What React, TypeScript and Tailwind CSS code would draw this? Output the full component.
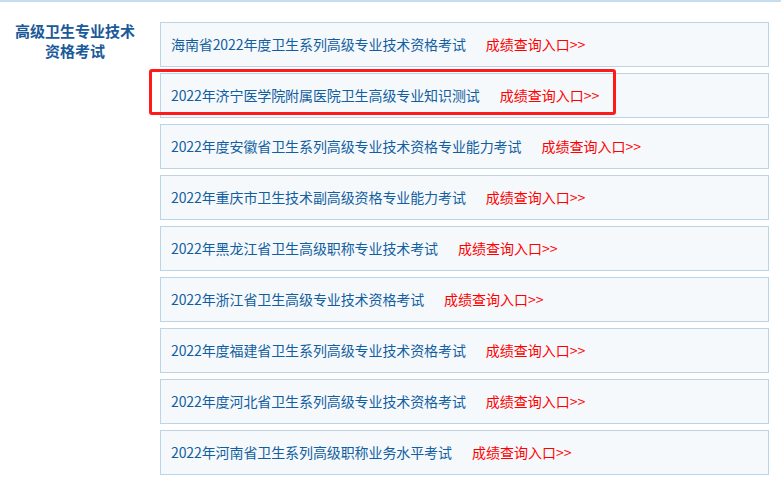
const exams = [
  '海南省2022年度卫生系列高级专业技术资格考试',
  '2022年济宁医学院附属医院卫生高级专业知识测试',
  '2022年度安徽省卫生系列高级专业技术资格专业能力考试',
  '2022年重庆市卫生技术副高级资格专业能力考试',
  '2022年黑龙江省卫生高级职称专业技术考试',
  '2022年浙江省卫生高级专业技术资格考试',
  '2022年度福建省卫生系列高级专业技术资格考试',
  '2022年度河北省卫生系列高级专业技术资格考试',
  '2022年河南省卫生系列高级职称业务水平考试',
];

export default function App() {
  return (
    <div
      className="w-[781px] h-[485px] bg-white border-t-2 border-[#c6dcef] overflow-hidden"
      style={{ fontFamily: '"Noto Sans CJK SC", "Noto Sans", sans-serif' }}
    >
      <div className="flex pt-[20px]">
        {/* category title */}
        <div className="w-[150px] shrink-0 text-center text-[15px] font-bold leading-[20px] text-[#1b5a99] -mt-[1px]">
          高级卫生专业技术
          <br />
          资格考试
        </div>

        {/* exam list */}
        <div className="relative ml-[10px] flex w-[609px] flex-col gap-[6px]">
          {exams.map((name) => (
            <a
              key={name}
              href="#"
              className="flex h-[45px] items-center border border-[#bad5ea] bg-[#f5f9fc] pl-[10px] text-[14px] whitespace-nowrap"
            >
              <span className="text-[#125ea0] tracking-[-0.1px]">{name}</span>
              <span className="ml-[20px] text-[#ff0000]">成绩查询入口&gt;&gt;</span>
            </a>
          ))}

          {/* highlight annotation */}
          <div className="pointer-events-none absolute left-[-11px] top-[47px] h-[46px] w-[467px] rounded-[3px] border-[3px] border-[#ff1a1a]" />
        </div>
      </div>
    </div>
  );
}
